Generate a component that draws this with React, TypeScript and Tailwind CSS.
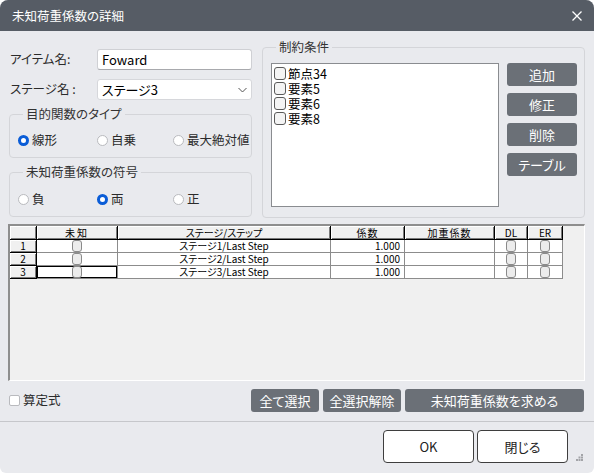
import React from 'react';

const font = "font-['Noto_Sans_CJK_JP','Noto_Sans',sans-serif] [font-feature-settings:'palt']";

const Radio = ({ checked }: { checked?: boolean }) =>
  checked ? (
    <span className="w-[11px] h-[11px] rounded-full border-[3px] border-[#0b5dd7] bg-white shrink-0" />
  ) : (
    <span className="w-[11px] h-[11px] rounded-full border border-[#b9babe] bg-white shrink-0" />
  );

const RadioGroup = ({ title, options, selected, top }: { title: string; options: string[]; selected: number; top: string }) => (
  <fieldset className={`border border-[#d4d5d9] rounded-[4px] pl-[8px] pb-[7px] ${top}`}>
    <legend className="ml-[5px] px-[3px] text-[12.5px] leading-[16px] text-[#333]">{title}</legend>
    <div className={`flex h-[20px] items-center ${title === '目的関数のタイプ' ? 'mt-[8px]' : 'mt-[9px]'}`}>
      {options.map((o, i) => (
        <div key={o} className={`flex items-center gap-[3px] whitespace-nowrap ${i === 0 ? 'w-[79px]' : i === 1 ? 'w-[76px]' : ''}`}>
          <Radio checked={i === selected} />
          <span className="text-[12.5px] leading-[16px] text-[#2b2b2b]">{o}</span>
        </div>
      ))}
    </div>
  </fieldset>
);

const ActionButton = ({ label, w }: { label: string; w: string }) => (
  <button className={`${w} h-[23px] rounded-[3px] bg-[#6b7077] text-white text-[13px] leading-[16px] flex items-center justify-center whitespace-nowrap`}>
    {label}
  </button>
);

const GridCheck = () => (
  <span className="w-[10px] h-[12px] rounded-[3px] border border-[#8a8a8a] bg-[#ececec]" />
);

const headCell = 'h-[14px] bg-[#f0f0f0] border-r border-b border-black shadow-[inset_1px_1px_0_#fff,inset_-1px_-1px_0_#7a7a7a] flex items-center justify-center text-[10px] leading-[12px] text-black';
const cell = 'h-[13px] bg-white border-r border-b border-[#8c8c8c] flex items-center text-[10px] leading-[12px] text-black';

const rows = [1, 2, 3];

export default function App() {
  return (
    <div className={`w-[595px] h-[473px] bg-white ${font}`}>
      <div className="w-[594px] h-[473px] bg-[#e9eaee] rounded-t-[8px] rounded-b-[6px] flex flex-col overflow-hidden">
        {/* title bar */}
        <div className="h-[31px] bg-[#565c65] flex items-center justify-between pl-[12px] pr-[12px] shrink-0">
          <span className="text-white text-[12.5px] leading-[16px]">未知荷重係数の詳細</span>
          <svg width="10" height="10" viewBox="0 0 10 10">
            <path d="M0.5 0.5L9.5 9.5M9.5 0.5L0.5 9.5" stroke="#fff" strokeWidth="1.3" />
          </svg>
        </div>

        {/* upper section */}
        <div className="flex px-[9px] pt-[8px] gap-[10px]">
          <div className="w-[244px] flex flex-col">
            <div className="flex items-center mt-[10px] h-[21px]">
              <span className="w-[88px] pl-[1px] text-[12.5px] text-[#2b2b2b]">アイテム名:</span>
              <div className="flex-1 h-[21px] bg-white border border-[#cfd0d4] border-b-[#a8a9ad] rounded-[3px] flex items-center pl-[4px] text-[13px] text-black">
                Foward
              </div>
            </div>
            <div className="flex items-center mt-[9px] h-[21px]">
              <span className="w-[88px] pl-[1px] text-[12.5px] text-[#2b2b2b]">ステージ名 :</span>
              <div className="flex-1 h-[21px] bg-white border border-[#d6d7db] rounded-[3px] flex items-center justify-between pl-[4px] pr-[4px] text-[13px] text-black">
                <span>ステージ3</span>
                <svg width="9" height="6" viewBox="0 0 9 6">
                  <path d="M0.5 1L4.5 5L8.5 1" fill="none" stroke="#555" strokeWidth="1" />
                </svg>
              </div>
            </div>
            <RadioGroup title="目的関数のタイプ" options={['線形', '自乗', '最大絶対値']} selected={0} top="mt-[6px]" />
            <RadioGroup title="未知荷重係数の符号" options={['負', '両', '正']} selected={1} top="mt-[6px]" />
          </div>

          <fieldset className="w-[323px] h-[179px] border border-[#d4d5d9] rounded-[4px] pl-[8px] pr-[7px]">
            <legend className="ml-[5px] px-[3px] text-[12.5px] leading-[16px] text-[#333]">制約条件</legend>
            <div className="flex mt-[8px] gap-[8px]">
              <div className="w-[228px] h-[144px] bg-white border border-[#8a8c90] pt-[2px] pl-[2px]">
                {['節点34', '要素5', '要素6', '要素8'].map(t => (
                  <div key={t} className="flex items-center h-[15px] gap-[2px]">
                    <span className="w-[12px] h-[13px] rounded-[3px] border border-[#5a5a5a] bg-[#f4f4f4]" />
                    <span className="text-[12.5px] leading-[14px] text-black">{t}</span>
                  </div>
                ))}
              </div>
              <div className="flex flex-col gap-[7px]">
                <ActionButton label="追加" w="w-[70px]" />
                <ActionButton label="修正" w="w-[70px]" />
                <ActionButton label="削除" w="w-[70px]" />
                <ActionButton label="テーブル" w="w-[70px]" />
              </div>
            </div>
          </fieldset>
        </div>

        {/* grid */}
        <div className="ml-[8px] mr-[9px] mt-[6px] h-[157px] border-t-2 border-l-2 border-[#8e8e8e] border-r border-b border-r-white border-b-white bg-[#f0f0f0]">
          <div className="grid grid-cols-[27px_81px_213px_74px_90px_33px_35px] w-[553px]">
            <div className={headCell}></div>
            <div className={`${headCell} tracking-[2px]`}>未知</div>
            <div className={headCell}>ステージ/ステップ</div>
            <div className={`${headCell} tracking-[1px]`}>係数</div>
            <div className={`${headCell} tracking-[1px]`}>加重係数</div>
            <div className={headCell}>DL</div>
            <div className={headCell}>ER</div>
            {rows.map(r => (
              <React.Fragment key={r}>
                <div className={`${headCell} !h-[13px]`}>{r}</div>
                <div className={`${cell} justify-center ${r === 3 ? 'shadow-[inset_0_0_0_1px_#000]' : ''}`}>
                  <GridCheck />
                </div>
                <div className={`${cell} justify-center`}>ステージ{r}/Last Step</div>
                <div className={`${cell} justify-end pr-[4px]`}>1.000</div>
                <div className={cell}></div>
                <div className={`${cell} justify-center`}>
                  <GridCheck />
                </div>
                <div className={`${cell} justify-center`}>
                  <GridCheck />
                </div>
              </React.Fragment>
            ))}
          </div>
        </div>

        {/* bottom actions */}
        <div className="flex items-center pl-[9px] pr-[10px] mt-[8px] h-[23px]">
          <span className="w-[11px] h-[11px] rounded-[2px] border border-[#b9babe] bg-white" />
          <span className="ml-[3px] text-[12.5px] text-[#2b2b2b]">算定式</span>
          <div className="flex-1" />
          <div className="flex gap-[4px]">
            <ActionButton label="全て選択" w="w-[68px]" />
            <ActionButton label="全選択解除" w="w-[78px]" />
            <ActionButton label="未知荷重係数を求める" w="w-[179px]" />
          </div>
        </div>

        <div className="h-px bg-[#c6c7cb] mt-[9px]" />

        <div className="flex justify-end items-end pr-[11px] mt-[8px]">
          <div className="flex gap-[3px]">
            <button className="w-[91px] h-[33px] bg-white border border-[#3e3e3e] rounded-[4px] text-[13px] text-[#222]">OK</button>
            <button className="w-[91px] h-[33px] bg-white border border-[#3e3e3e] rounded-[4px] text-[13px] text-[#222]">閉じる</button>
          </div>
          <svg width="7" height="7" viewBox="0 0 7 7" className="ml-[8px] mb-[2px]">
            <rect x="5" y="0" width="2" height="2" fill="#a3a4a8" />
            <rect x="2.5" y="2.5" width="2" height="2" fill="#a3a4a8" />
            <rect x="5" y="2.5" width="2" height="2" fill="#a3a4a8" />
            <rect x="0" y="5" width="2" height="2" fill="#a3a4a8" />
            <rect x="2.5" y="5" width="2" height="2" fill="#a3a4a8" />
            <rect x="5" y="5" width="2" height="2" fill="#a3a4a8" />
          </svg>
        </div>
      </div>
    </div>
  );
}
